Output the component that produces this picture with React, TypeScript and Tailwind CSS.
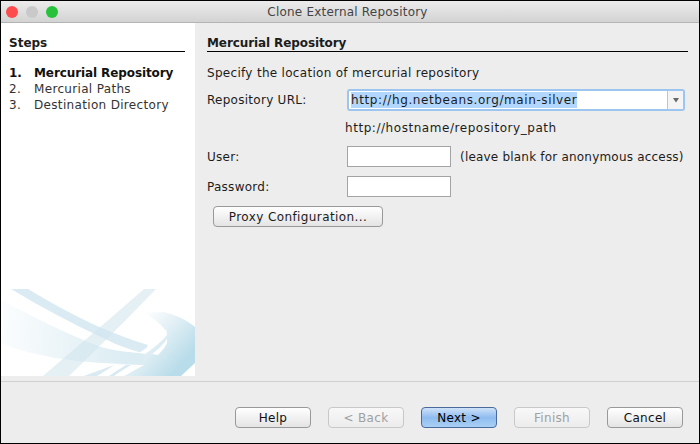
const font = "font-['DejaVu_Sans',sans-serif]";

const steps = [
  { n: "1.", label: "Mercurial Repository", active: true },
  { n: "2.", label: "Mercurial Paths" },
  { n: "3.", label: "Destination Directory" },
];

const footerButtons = [
  { label: "Help" },
  { label: "< Back", disabled: true },
  { label: "Next >", primary: true },
  { label: "Finish", disabled: true },
  { label: "Cancel" },
];

function SidebarArt() {
  return (
    <svg className="block h-[88px] w-[194px] shrink-0" viewBox="0 0 194 88" fill="none">
      <defs>
        <linearGradient id="sweep" gradientUnits="userSpaceOnUse" x1="0" y1="50" x2="130" y2="60">
          <stop offset="0" stopColor="#fbfdfe" />
          <stop offset="0.4" stopColor="#eef6f9" />
          <stop offset="1" stopColor="#dbecf3" />
        </linearGradient>
        <linearGradient id="swirl" gradientUnits="userSpaceOnUse" x1="138" y1="30" x2="184" y2="72">
          <stop offset="0" stopColor="#ffffff" />
          <stop offset="0.5" stopColor="#dfeef4" />
          <stop offset="1" stopColor="#b9dcea" />
        </linearGradient>
      </defs>
      <path d="M0 12 C30 28 70 48 100 59 C115 63 130 65 146 65 L146 76 C90 77 35 70 0 55 Z" fill="url(#sweep)" />
      <path d="M10 1 L27 1 C55 18 85 34 113 45 C125 50 137 54 147 57 L143 65 C125 61 112 55 100 49 C70 35 40 19 10 1 Z" fill="#dbebf3" />
      <path d="M155 1 L143 1 C110 30 72 62 42 88 L68 88 C97 60 127 30 155 1 Z" fill="#cfe4ed" fillOpacity="0.55" />
      <path d="M143 25 L163 24 C175 27 186 32 194 39 L194 75 L180 88 L123 88 L143 76 L143 65 L165 44 C162 37 152 30 143 25 Z" fill="url(#swirl)" />
      <path d="M83 88 L113 77 L143 76 L123 88 Z" fill="#d9eaf2" />
      <path d="M165 41 C158 50 148 59 138 65 L144 66 C153 60 161 53 166 47 Z" fill="#ffffff" />
      <path d="M166 51 C161 58 156 62 151 66 L157 67 C161 63 165 58 166 55 Z" fill="#ffffff" />
      <path d="M125 77 L113 77 C108 81 102 84 96 88 L108 88 C113 84 119 81 125 77 Z" fill="#ffffff" />
      <path d="M143 77 L130 77 C124 81 118 84 113 88 L123 88 C130 84 136 81 143 77 Z" fill="#ffffff" />
    </svg>
  );
}

export default function App() {
  return (
    <div className={`${font} flex h-[444px] w-[700px] flex-col overflow-hidden border-x border-b border-black bg-[#ededed] text-[12px] text-[#1c1c1c]`}>
      {/* title bar */}
      <div className="relative flex h-[23px] shrink-0 items-center justify-center border-y border-t-black border-b-[#b4b4b4] bg-gradient-to-b from-[#ececec] to-[#d3d3d3] pr-[5px]">
        <div className="absolute left-[5px] top-[5px] flex gap-[8px]">
          <span className="h-3 w-3 rounded-full bg-[#fc4c4d]" />
          <span className="h-3 w-3 rounded-full bg-[#c9c9c9]" />
          <span className="h-3 w-3 rounded-full bg-[#28c13b]" />
        </div>
        <span className="text-[12px] tracking-[0.2px] text-[#444]">Clone External Repository</span>
      </div>

      <div className="flex h-[353px] shrink-0">
        {/* steps panel */}
        <div className="flex w-[194px] shrink-0 flex-col justify-between bg-white">
          <div className="px-[8px] pt-[14px]">
            <div className="mr-[2px] h-[15px] border-b border-black text-[12px] font-bold leading-[13px]">Steps</div>
            <ol className="mt-[13px] leading-[16px]">
              {steps.map((s) => (
                <li key={s.n} className={`flex ${s.active ? "font-bold tracking-[-0.1px] text-[#111]" : "tracking-[0.33px] text-[#333]"}`}>
                  <span className="w-[25px]">{s.n}</span>
                  <span>{s.label}</span>
                </li>
              ))}
            </ol>
          </div>
          <SidebarArt />
        </div>

        {/* form */}
        <div className="flex-1 pl-[12px] pr-[11px] pt-[14px]">
          <div className="h-[15px] border-b border-black font-bold leading-[13px] tracking-[-0.1px]">Mercurial Repository</div>
          <p className="mt-[13px] leading-[16px] tracking-[0.3px]">Specify the location of mercurial repository</p>

          <div className="mt-[8px] flex h-[22px] items-center">
            <span className="w-[140px] shrink-0 tracking-[0.27px]">Repository URL:</span>
            <div className="flex h-[22px] w-[338px] items-stretch rounded-[3px] border-2 border-[#9cc5ef] bg-white">
              <div className="flex flex-1 items-center pl-[2px]">
                <span className="bg-[#b2d7ff] leading-[16px] tracking-[0.6px]">http://hg.netbeans.org/main-silver</span>
              </div>
              <div className="flex w-[16px] items-center justify-center border-l border-[#c5c5c5] bg-[#f4f4f4]">
                <svg width="8" height="6" viewBox="0 0 8 6"><path d="M1 1h6L4 5.500z" fill="#666" /></svg>
              </div>
            </div>
          </div>

          <p className="mt-[9px] pl-[138px] leading-[16px] tracking-[0.55px]">http://hostname/repository_path</p>

          <div className="mt-[10px] flex h-[21px] items-center">
            <span className="w-[140px] shrink-0 tracking-[0.27px]">User:</span>
            <div className="h-[21px] w-[104px] border border-[#a3a3a3] bg-white" />
            <span className="ml-[9px] tracking-[0.2px]">(leave blank for anonymous access)</span>
          </div>
          <div className="mt-[9px] flex h-[21px] items-center">
            <span className="w-[140px] shrink-0 tracking-[0.27px]">Password:</span>
            <div className="h-[21px] w-[104px] border border-[#a3a3a3] bg-white" />
          </div>

          <button className="ml-[6px] mt-[9px] flex h-[21px] w-[170px] items-center justify-center rounded-[4px] border border-[#999] bg-gradient-to-b from-white to-[#e4e4e4] tracking-[0.4px]">
            Proxy Configuration...
          </button>
        </div>
      </div>

      {/* footer */}
      <div className="mt-[5px] flex flex-1 items-start justify-end gap-[17px] border-t border-[#d0d0d0] pr-[16px] pt-[25px]">
        {footerButtons.map((b) => (
          <button
            key={b.label}
            className={`flex h-[21px] w-[76px] items-center justify-center rounded-[4px] border tracking-[0.3px] ${
              b.primary
                ? "border-[#4a6a9c] bg-gradient-to-b from-[#cfe2f8] via-[#8fbcf0] to-[#a9d0f5] text-black"
                : b.disabled
                  ? "border-[#c8c8c8] bg-gradient-to-b from-[#f8f8f8] to-[#ececec] text-[#a0a0a0]"
                  : "border-[#999] bg-gradient-to-b from-white to-[#e4e4e4] text-[#111]"
            }`}
          >
            {b.label}
          </button>
        ))}
      </div>
    </div>
  );
}
